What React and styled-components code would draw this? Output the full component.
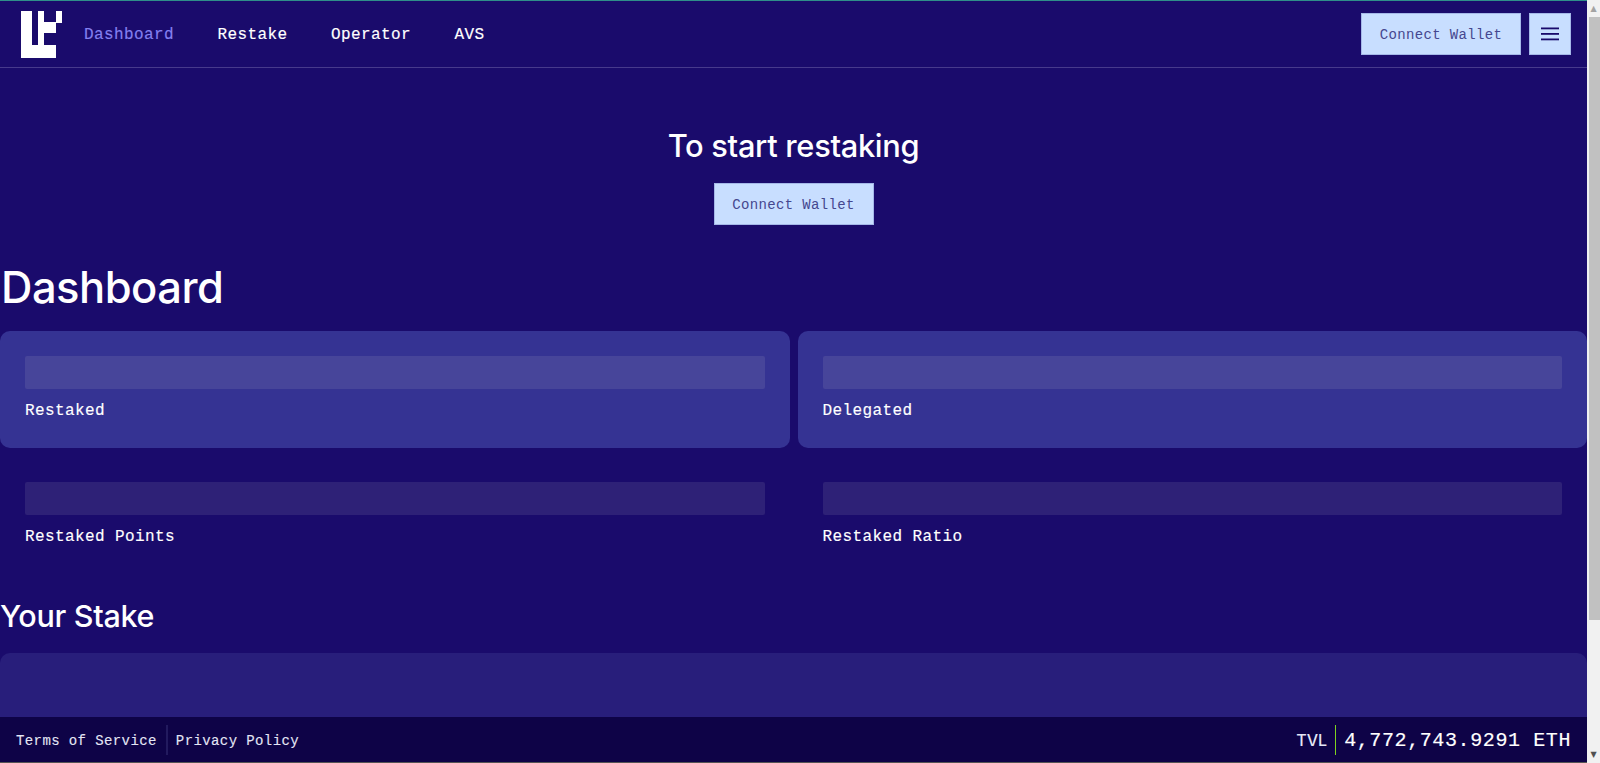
import React from 'react';
import styled, { createGlobalStyle } from 'styled-components';

const mono = `"Liberation Mono", "DejaVu Sans Mono", monospace`;
const display = `Inter, "Noto Sans", sans-serif`;

const GlobalStyle = createGlobalStyle`
  html, body {
    margin: 0;
    height: 100%;
    overflow: hidden;
    background: #f1f1f1;
  }
`;

const Page = styled.div`
  display: flex;
  height: 763px;
`;

const Viewport = styled.div`
  flex: 1;
  display: flex;
  flex-direction: column;
  min-width: 0;
  background: #1a0b6c;
  border-top: 1px solid #2f8f8a;
  border-bottom: 1px solid #555;
  color: #fff;
`;

const Header = styled.header`
  display: flex;
  align-items: center;
  justify-content: space-between;
  height: 66px;
  flex-shrink: 0;
  padding: 0 16px 0 21px;
  border-bottom: 1px solid #473a8c;
`;

const NavGroup = styled.nav`
  display: flex;
  align-items: center;
`;

const NavLink = styled.a`
  margin-left: ${(p) => (p.$first ? '22px' : '43.5px')};
  padding-top: 2px;
  font: 400 16px ${mono};
  letter-spacing: 0.4px;
  -webkit-text-stroke: 0.15px currentColor;
  color: ${(p) => (p.$active ? '#8480f0' : '#fff')};
`;

const Actions = styled.div`
  display: flex;
  gap: 8px;
`;

const Button = styled.button`
  width: ${(p) => (p.$square ? '42px' : '160px')};
  height: 42px;
  box-sizing: border-box;
  display: flex;
  align-items: center;
  justify-content: center;
  padding: ${(p) => (p.$square ? '0' : '1px 0 0')};
  background: #c8deff;
  color: #45478f;
  border: 1px solid #a5b8e8;
  font: 400 14px ${mono};
  letter-spacing: 0.35px;
`;

const Main = styled.main`
  flex: 1;
  overflow: hidden;
  min-height: 0;
`;

const Hero = styled.section`
  display: flex;
  flex-direction: column;
  align-items: center;
  padding-top: 60px;
`;

const HeroTitle = styled.h2`
  margin: 0 0 19px;
  font: 500 30.8px/36px ${display};
  letter-spacing: -0.3px;
`;

const PageTitle = styled.h1`
  margin: 36px 0 18px 1px;
  font: 500 43.5px/52px ${display};
  letter-spacing: -0.5px;
`;

const Grid = styled.div`
  display: grid;
  grid-template-columns: 1fr 1fr;
  column-gap: 8px;
  row-gap: 9px;
`;

const Stat = styled.div`
  padding: 25px;
  height: 117px;
  box-sizing: border-box;
  border-radius: 10px;
  background: ${(p) => (p.$filled ? '#353393' : 'transparent')};
`;

const Skeleton = styled.div`
  height: 33px;
  border-radius: 2px;
  background: ${(p) => (p.$filled ? '#47459a' : '#2e2177')};
`;

const StatLabel = styled.div`
  margin-top: 12px;
  font: 400 16px/20px ${mono};
  letter-spacing: 0.4px;
  -webkit-text-stroke: 0.15px currentColor;
`;

const SectionTitle = styled.h3`
  margin: 22px 0 17px;
  font: 500 30.5px/40px ${display};
  letter-spacing: -0.3px;
`;

const Panel = styled.div`
  height: 80px;
  border-radius: 10px;
  background: #281e7b;
`;

const Footer = styled.footer`
  display: flex;
  align-items: center;
  justify-content: space-between;
  flex-shrink: 0;
  height: 45px;
  box-sizing: border-box;
  padding: 1px 16px 0;
  background: #0e0347;
`;

const FooterLinks = styled.div`
  display: flex;
  align-items: center;
  font: 400 14px ${mono};
  letter-spacing: 0.4px;
  -webkit-text-stroke: 0.1px currentColor;
  color: #e4e6f5;
`;

const FooterLink = styled.a`
  display: flex;
  align-items: center;
  height: 30px;
  box-sizing: border-box;
  padding: 2px 9px 0 0;
  margin-right: 8px;
  border-right: ${(p) => (p.$divider ? '2px solid #221a5e' : 'none')};
`;

const Tvl = styled.div`
  display: flex;
  align-items: center;
  gap: 8px;
`;

const TvlLabel = styled.span`
  font: 500 16px ${display};
  color: #e4e6f5;
`;

const TvlValue = styled.span`
  display: flex;
  align-items: center;
  height: 30px;
  padding-left: 8px;
  border-left: 1px solid #7ed321;
  font: 400 20px ${mono};
  letter-spacing: 0.6px;
  -webkit-text-stroke: 0.15px currentColor;
`;

const Scrollbar = styled.div`
  flex: 0 0 13px;
  display: flex;
  flex-direction: column;
  background: #f1f1f1;
`;

const ScrollArrow = styled.div`
  height: 17px;
  display: flex;
  align-items: center;
  justify-content: center;
  color: ${(p) => p.$color};
  font-size: 8px;
  font-family: "DejaVu Sans", sans-serif;
`;

const ScrollThumb = styled.div`
  height: 603px;
  margin-left: 2px;
  background: #c1c1c1;
`;

const ScrollSpacer = styled.div`
  flex: 1;
`;

const Logo = () => (
  <svg width="41" height="47" viewBox="0 0 41 47" fill="#fff">
    <rect x="0" y="0" width="11" height="47" />
    <rect x="0" y="34" width="35" height="13" />
    <rect x="17" y="0" width="6" height="34" />
    <rect x="23" y="11" width="12" height="11" />
    <rect x="35" y="0" width="6" height="12" />
  </svg>
);

const MenuIcon = () => (
  <svg width="18" height="14" viewBox="0 0 18 14" fill="#19096b">
    <rect y="0.5" width="18" height="1.8" />
    <rect y="6" width="18" height="1.8" />
    <rect y="11.5" width="18" height="1.8" />
  </svg>
);

const App = () => (
  <Page>
    <GlobalStyle />
    <Viewport>
      <Header>
        <NavGroup>
          <Logo />
          <NavLink $first $active>Dashboard</NavLink>
          <NavLink>Restake</NavLink>
          <NavLink>Operator</NavLink>
          <NavLink>AVS</NavLink>
        </NavGroup>
        <Actions>
          <Button>Connect Wallet</Button>
          <Button $square aria-label="Menu"><MenuIcon /></Button>
        </Actions>
      </Header>
      <Main>
        <Hero>
          <HeroTitle>To start restaking</HeroTitle>
          <Button>Connect Wallet</Button>
        </Hero>
        <PageTitle>Dashboard</PageTitle>
        <Grid>
          <Stat $filled><Skeleton $filled /><StatLabel>Restaked</StatLabel></Stat>
          <Stat $filled><Skeleton $filled /><StatLabel>Delegated</StatLabel></Stat>
          <Stat><Skeleton /><StatLabel>Restaked Points</StatLabel></Stat>
          <Stat><Skeleton /><StatLabel>Restaked Ratio</StatLabel></Stat>
        </Grid>
        <SectionTitle>Your Stake</SectionTitle>
        <Panel />
      </Main>
      <Footer>
        <FooterLinks>
          <FooterLink $divider>Terms of Service</FooterLink>
          <FooterLink>Privacy Policy</FooterLink>
        </FooterLinks>
        <Tvl>
          <TvlLabel>TVL</TvlLabel>
          <TvlValue>4,772,743.9291 ETH</TvlValue>
        </Tvl>
      </Footer>
    </Viewport>
    <Scrollbar>
      <ScrollArrow $color="#a3a3a3">▲</ScrollArrow>
      <ScrollThumb />
      <ScrollSpacer />
      <ScrollArrow $color="#505050">▼</ScrollArrow>
    </Scrollbar>
  </Page>
);

export default App;
